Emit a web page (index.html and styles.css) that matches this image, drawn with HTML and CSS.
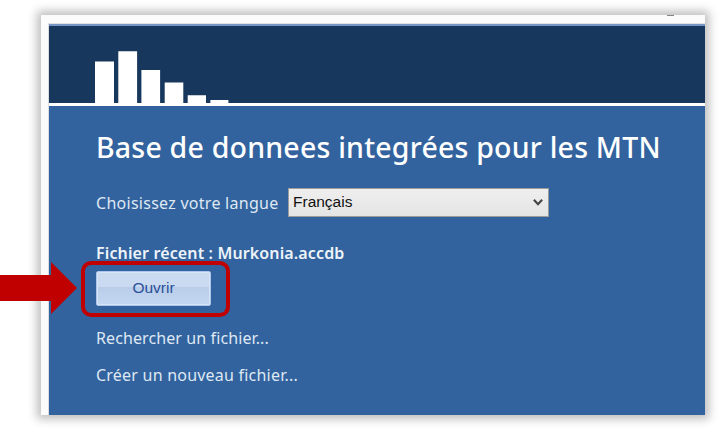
FILE: index.html
```
<!DOCTYPE html>
<html lang="fr">
<head>
<meta charset="utf-8">
<title>Base de donnees integrées pour les MTN</title>
<link rel="stylesheet" href="styles.css">
</head>
<body>
<main class="window">
  <div class="titlebar"><span class="tick"></span></div>
  <div class="client">
    <header class="banner">
      <svg class="logo" width="134" height="52" viewBox="0 0 134 52" fill="#fff" aria-hidden="true">
        <path d="M0 10.5h19V52H0zM23.3.2h18.8V52H23.3zM46.4 19h18.7v33H46.4zM69.7 31.5h18.6V52H69.7zM92.7 44.2h18.3V52H92.7zM115.4 49h18V52h-18z"/>
      </svg>
    </header>
    <section class="content">
      <h1 class="title">Base de donnees integrées pour les MTN</h1>
      <div class="language">
        <span class="label">Choisissez votre langue</span>
        <div class="select"><span>Français</span>
          <svg width="10" height="8" viewBox="0 0 10 8" fill="none" stroke="#444" stroke-width="2.1" aria-hidden="true"><path d="M.9 1.7 5 6.2 9.1 1.7"/></svg>
        </div>
      </div>
      <div class="recent">Fichier récent : Murkonia.accdb</div>
      <button class="open">Ouvrir</button>
      <a class="link find">Rechercher un fichier...</a>
      <a class="link create">Créer un nouveau fichier...</a>
    </section>
  </div>
</main>
<div class="highlight"></div>
<svg class="arrow" width="78" height="52" viewBox="0 0 78 52" aria-hidden="true"><path fill="#c00000" d="M0 13h51V0l26 26-26 26V39H0z"/></svg>
</body>
</html>
```
FILE: styles.css
```
* { box-sizing: border-box; }
body {
  margin: 0;
  width: 723px;
  height: 430px;
  padding: 15px 0 0 41px;
  overflow: hidden;
  background: #fff;
  font-family: "Noto Sans", "Open Sans", sans-serif;
}
.window {
  display: flex;
  flex-direction: column;
  width: 664px;
  height: 400px;
  background: #fbfbfb;
  box-shadow: 0 0 9px 4px rgba(0, 0, 0, .26);
}
.titlebar {
  display: flex;
  justify-content: flex-end;
  height: 8px;
  padding-right: 31px;
}
.tick { width: 7px; height: 1px; background: #858585; }
.client {
  flex: 1;
  display: flex;
  flex-direction: column;
  margin-left: 7px;
  border-top: 1px solid #dfe1e5;
  border-left: 1px solid #dadcdf;
  background: #32639e;
}
.banner {
  display: flex;
  align-items: flex-end;
  height: 82px;
  padding-left: 46px;
  border-top: 2px solid #7896c5;
  border-bottom: 3px solid #fff;
  background: #18375d;
}
.logo { display: block; }
.content {
  display: flex;
  flex-direction: column;
  align-items: flex-start;
  padding: 21px 0 0 47px;
  color: #dfe8f3;
}
.title {
  margin: 0;
  height: 40px;
  color: #fff;
  font-size: 28.5px;
  font-weight: 500;
  line-height: 40px;
  letter-spacing: .21px;
  white-space: nowrap;
}
.language {
  display: flex;
  align-items: center;
  margin-top: 21px;
}
.label { width: 192px; font-size: 16px; letter-spacing: .27px; white-space: nowrap; }
.select {
  display: flex;
  align-items: center;
  justify-content: space-between;
  width: 261px;
  height: 29px;
  padding: 0 5px 1px 4px;
  border: 1px solid #9c9c9c;
  background: linear-gradient(#efefef, #e4e4e4);
  color: #111;
  font: 15.5px "Liberation Sans", sans-serif;
}
.recent {
  height: 24px;
  margin-top: 24px;
  color: #eef3f9;
  font-size: 16px;
  font-weight: 600;
  line-height: 24px;
  letter-spacing: .13px;
}
.open {
  width: 115px;
  height: 35px;
  margin-top: 6px;
  padding: 0 0 1px;
  border: 1px solid #aac6ea;
  border-radius: 2px;
  background: linear-gradient(#c9daf1 0 44%, #b9cde9 46%, #c4d8f1);
  box-shadow: inset 0 0 0 1px #d8e5f6;
  color: #2b4f99;
  font: 15.5px "Liberation Sans", sans-serif;
}
.link { height: 24px; font-size: 16px; line-height: 24px; }
.find { margin-top: 20px; letter-spacing: .1px; }
.create { margin-top: 13px; letter-spacing: .22px; }
.highlight {
  position: absolute;
  left: 81px;
  top: 261px;
  width: 149px;
  height: 56px;
  border: 4px solid #c00000;
  border-radius: 10px;
}
.arrow { position: absolute; left: 0; top: 262px; }
```
